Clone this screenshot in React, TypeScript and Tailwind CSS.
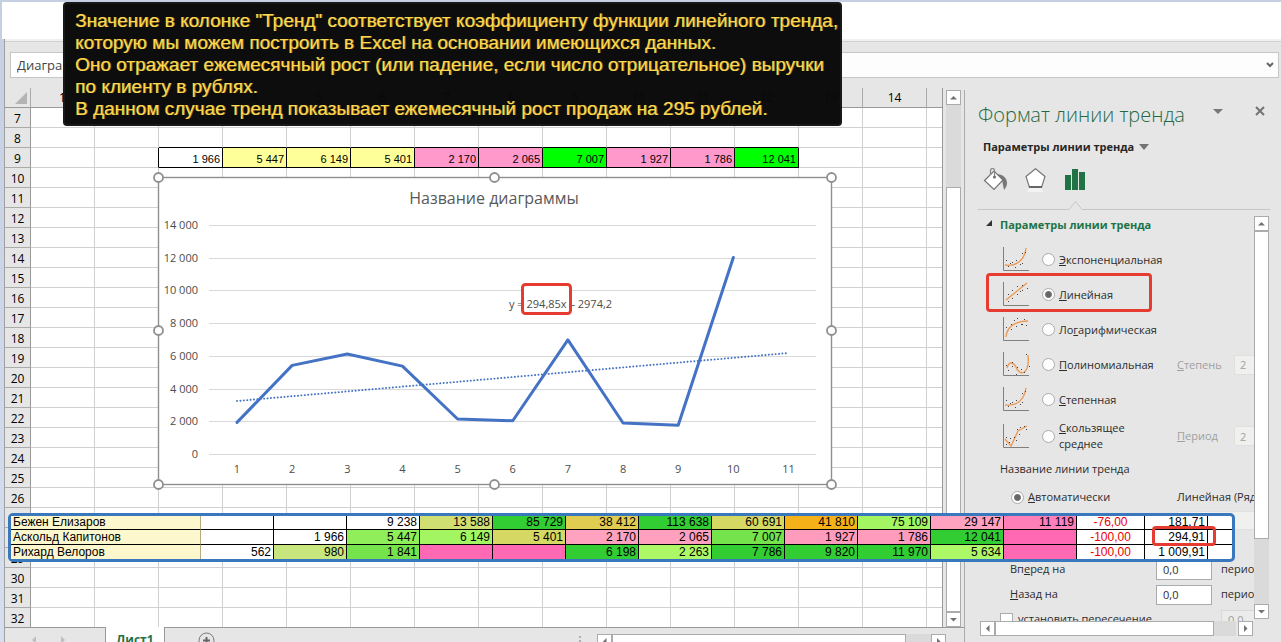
import React from "react";
import clsx from "clsx";

const ROWS = Array.from({ length: 26 }, (_, i) => i + 7);
const COLUMNS = Array.from({ length: 14 }, (_, i) => i + 1);

const SALES_ROW = 9;
const SALES: Record<number, { value: string; fill: string }> = {
  3: { value: "1 966", fill: "bg-white" },
  4: { value: "5 447", fill: "bg-[#ffff99]" },
  5: { value: "6 149", fill: "bg-[#ffff99]" },
  6: { value: "5 401", fill: "bg-[#ffff99]" },
  7: { value: "2 170", fill: "bg-[#ff99cc]" },
  8: { value: "2 065", fill: "bg-[#ff99cc]" },
  9: { value: "7 007", fill: "bg-[#00ff00]" },
  10: { value: "1 927", fill: "bg-[#ff99cc]" },
  11: { value: "1 786", fill: "bg-[#ff99cc]" },
  12: { value: "12 041", fill: "bg-[#00ff00]" },
};

function SheetCell({ row, col }: { row: number; col: number }) {
  const sale = row === SALES_ROW ? SALES[col] : undefined;
  const blackRight = row === SALES_ROW && col >= 2 && col <= 12;
  const blackBottom = (row === SALES_ROW || row === SALES_ROW - 1) && col >= 3 && col <= 12;
  return (
    <td
      className={clsx(
        "p-0 pr-[2px] text-right align-bottom font-['Liberation_Sans',sans-serif] text-[11px] leading-[16px] text-black",
        row < 32 && "border-b",
        col < 15 && "border-r",
        blackRight ? "border-r-black" : "border-r-[#d0d0d0]",
        blackBottom ? "border-b-black" : "border-b-[#d0d0d0]",
        sale ? sale.fill : "bg-white",
      )}
    >
      {sale?.value}
    </td>
  );
}

function Sheet() {
  return (
    <table className="w-full table-fixed border-separate border-spacing-0 border-r border-[#999]">
      <colgroup>
        <col className="w-[26px]" />
        {COLUMNS.map((c) => (
          <col key={c} className="w-[64px]" />
        ))}
        <col />
      </colgroup>
      <thead>
        <tr className="h-[20px]">
          <th className="border-r border-b border-r-[#ababab] border-b-[#999] p-0">
            <svg className="ml-[10px] block" width="12" height="12" aria-hidden="true">
              <path d="M12 0V12H0Z" fill="#b4b4b4" />
            </svg>
          </th>
          {COLUMNS.map((c) => (
            <th
              key={c}
              className="border-r border-b border-r-[#ababab] border-b-[#999] p-0 text-[12px] leading-[19px] font-normal text-black"
            >
              {c}
            </th>
          ))}
          <th className="border-b border-[#999] p-0" />
        </tr>
      </thead>
      <tbody>
        {ROWS.map((row) => (
          <tr key={row} className={row < 32 ? "h-[20px]" : "h-[19px]"}>
            <th
              className={clsx(
                "border-r border-r-[#999] border-b-[#ababab] p-0 pt-[2px] text-[12px] leading-[17px] font-normal text-black",
                row < 32 && "border-b",
              )}
            >
              {row}
            </th>
            {COLUMNS.map((col) => (
              <SheetCell key={col} row={row} col={col} />
            ))}
            <SheetCell row={row} col={15} />
          </tr>
        ))}
      </tbody>
    </table>
  );
}

const POINTS = [1966, 5447, 6149, 5401, 2170, 2065, 7007, 1927, 1786, 12041];
const xAt = (n: number) => 79 + (n - 1) * 55.15;
const yAt = (v: number) => 277 - (v * 229) / 14000;

function Chart() {
  const ticks = [0, 2000, 4000, 6000, 8000, 10000, 12000, 14000];
  const handles = [
    [0, 0], [336, 0], [673, 0],
    [0, 153], [673, 153],
    [0, 307], [336, 307], [673, 307],
  ];
  return (
    <svg
      className="block overflow-visible font-['Open_Sans','Noto_Sans',sans-serif]"
      width="674"
      height="308"
      role="img"
      aria-label="Название диаграммы"
    >
      <rect x="0.5" y="0.5" width="673" height="307" fill="#fff" stroke="#8f8f8f" strokeWidth="1.4" />
      <text x="336" y="27" textAnchor="middle" fontSize="16" fill="#595959">
        Название диаграммы
      </text>
      {ticks.map((t) => {
        const y = Math.round(yAt(t)) + 0.5;
        return (
          <g key={t}>
            <path d={`M51 ${y}H658`} stroke="#d9d9d9" />
            <text x="40" y={y + 3} textAnchor="end" fontSize="11" fill="#4c4c4c">
              {t === 0 ? "0" : `${t / 1000} 000`}
            </text>
          </g>
        );
      })}
      {Array.from({ length: 11 }, (_, i) => (
        <text key={i} x={xAt(i + 1)} y="296" textAnchor="middle" fontSize="11" fill="#4c4c4c">
          {i + 1}
        </text>
      ))}
      <path
        d={`M${xAt(1)} 224L${xAt(11)} 176`}
        stroke="#4472c4"
        strokeWidth="1.9"
        strokeDasharray="0.1 3.3"
        strokeLinecap="round"
      />
      <polyline
        points={POINTS.map((v, i) => `${xAt(i + 1)},${yAt(v) + 0.5}`).join(" ")}
        fill="none"
        stroke="#4472c4"
        strokeWidth="3"
        strokeLinecap="round"
        strokeLinejoin="round"
      />
      <rect x="364.5" y="107.5" width="48" height="29" rx="3" fill="#fff" />
      <text x="351" y="131" fontSize="11" fill="#4c4c4c">
        y = 294,85x – 2974,2
      </text>
      <rect x="364.5" y="107.5" width="48" height="29" rx="3" fill="none" stroke="#e53b31" strokeWidth="3" />
      {handles.map(([x, y]) => (
        <circle key={`${x}-${y}`} cx={x + 0.5} cy={y + 0.5} r="4.5" fill="#fff" stroke="#8f8f8f" strokeWidth="1.8" />
      ))}
    </svg>
  );
}

type Direction = "up" | "down" | "left" | "right";
const ARROWS: Record<Direction, string> = {
  up: "M3 8.5L6.5 5L10 8.5Z",
  down: "M3 5L6.5 8.5L10 5Z",
  left: "M8.5 3L5 6.5L8.5 10Z",
  right: "M5 3L8.5 6.5L5 10Z",
};

function ScrollButton({ dir, label }: { dir: Direction; label: string }) {
  return (
    <button aria-label={label} className="block size-[15px] shrink-0 border border-[#ababab] bg-white">
      <svg width="13" height="13" className="block" aria-hidden="true">
        <path d={ARROWS[dir]} fill="#737373" />
      </svg>
    </button>
  );
}

function BottomBar() {
  return (
    <div className="flex h-[15px] shrink-0 overflow-hidden">
      <div className="w-[101px] shrink-0 border-t border-r border-[#999]">
        <svg className="ml-[26px] block" width="40" height="14" aria-hidden="true">
          <path d="M5 8V16L1 12ZM30 8V16L34 12Z" fill="#c0c0c0" />
        </svg>
      </div>
      <button className="h-[26px] w-[58px] shrink-0 bg-white text-[12px] leading-[26px] font-bold text-[#1f7246]">Лист1</button>
      <div className="flex min-w-0 flex-1 border-t border-l border-[#999]">
        <button aria-label="Новый лист" className="mt-[4px] ml-[33px] block size-[17px] shrink-0">
          <svg width="17" height="17" className="block" aria-hidden="true">
            <circle cx="8.5" cy="8.5" r="7.5" fill="none" stroke="#777" />
            <path d="M8.5 5V12M5 8.5H12" stroke="#666" strokeWidth="2" />
          </svg>
        </button>
        <div className="flex-1" />
        <svg className="mr-[15px] block shrink-0" width="3" height="14" aria-hidden="true">
          <path d="M0 8h2v2H0zM0 12h2v2H0z" fill="#b0b0b0" />
        </svg>
        <div className="mt-[6px] mr-[18px] flex w-[349px] shrink-0">
          <ScrollButton dir="left" label="Прокрутить влево" />
          <div className="h-[15px] flex-1 border border-[#ababab] bg-white" />
          <div className="w-[25px] bg-[#dadada]" />
          <ScrollButton dir="right" label="Прокрутить вправо" />
        </div>
      </div>
    </div>
  );
}

const TREND_ICONS: Record<string, { curve: string; dots: number[][] }> = {
  exp: {
    curve: "M2 18C13 20 22 13 23 1",
    dots: [[3, 13], [7, 16], [9, 15], [13, 13], [12, 20], [5, 19], [17, 17], [19, 6], [19, 16], [22, 5]],
  },
  linear: {
    curve: "M3 18L24 1",
    dots: [[5, 12], [9, 8], [5, 19], [9, 16], [14, 4], [14, 12], [17, 9], [19, 3], [19, 8], [24, 6]],
  },
  log: {
    curve: "M3 20C4 9 13 4 25 4",
    dots: [[3, 10], [8, 7], [11, 3], [14, 1], [13, 9], [8, 12], [18, 7], [19, 7], [21, 2], [23, 8]],
  },
  poly: {
    curve: "M4 16C6 8 11 11 13 15C16 24 27 24 25 3",
    dots: [[3, 13], [5, 18], [9, 10], [9, 14], [14, 15], [13, 22], [18, 17], [21, 20], [23, 2], [26, 14]],
  },
  power: {
    curve: "M2 18C13 19 21 14 23 1",
    dots: [[3, 13], [7, 16], [9, 15], [13, 13], [12, 20], [5, 19], [17, 17], [19, 6], [19, 15], [22, 4]],
  },
  moving: {
    curve: "M2 15L8 22L15 7L24 2",
    dots: [[3, 13], [3, 20], [6, 18], [7, 14], [11, 13], [13, 16], [14, 5], [16, 10], [17, 3], [21, 2], [23, 5]],
  },
};

function TrendIcon({ kind }: { kind: string }) {
  const icon = TREND_ICONS[kind];
  return (
    <svg width="27" height="25" className="block shrink-0" aria-hidden="true">
      <path d="M0.5 0V23.5H26" fill="none" stroke="#808080" />
      <path d={icon.curve} fill="none" stroke="#ed9a55" strokeWidth="1.4" />
      {icon.dots.map(([x, y]) => (
        <rect key={`${x}-${y}`} x={x} y={y} width="1" height="1" fill="#444" />
      ))}
    </svg>
  );
}

const radioClass =
  "size-[13px] shrink-0 appearance-none rounded-full border border-[#ababab] bg-white checked:bg-[radial-gradient(circle,#666_2px,#777_3px,#fff_4px)]";

function TrendOption({
  id,
  accel,
  before = "",
  rest,
  checked = false,
  tall = false,
  extra,
}: {
  id: string;
  accel: string;
  before?: string;
  rest: string;
  checked?: boolean;
  tall?: boolean;
  extra?: { accel: string; rest: string };
}) {
  return (
    <div className={clsx("flex w-[280px] items-center", tall ? "h-[38px]" : "h-[35px]")}>
      <TrendIcon kind={id} />
      <input id={id} type="radio" name="trend" defaultChecked={checked} className={clsx(radioClass, "ml-[12px]")} />
      <label htmlFor={id} className={clsx("ml-[4px] shrink-0 leading-[16px]", tall ? "w-[91px] pr-[10px]" : "w-[118px]")}>
        {before}
        <u>{accel}</u>
        {rest}
      </label>
      {extra && (
        <>
          <label htmlFor={`${id}-value`} className={clsx("w-[57px] shrink-0 pt-px text-[#a0a0a0]", tall && "ml-[27px]")}>
            <u>{extra.accel}</u>
            {extra.rest}
          </label>
          <input
            id={`${id}-value`}
            disabled
            defaultValue="2"
            className="h-[20px] w-[44px] shrink-0 border border-[#e0e0dc] bg-[#f0f0ee] px-[5px] text-[#a0a0a0]"
          />
        </>
      )}
    </div>
  );
}

function PeriodField({ id, before, accel, rest }: { id: string; before: string; accel: string; rest: string }) {
  return (
    <div className="flex h-[25px] w-[320px] items-center pl-[10px]">
      <label htmlFor={id} className="w-[146px] shrink-0">
        {before}
        <u>{accel}</u>
        {rest}
      </label>
      <input id={id} defaultValue="0,0" className="h-[20px] w-[56px] shrink-0 border border-[#ababab] bg-white px-[6px]" />
      <span className="ml-[9px]">периода</span>
    </div>
  );
}

function TrendPane() {
  return (
    <aside className="mt-[12px] flex w-[317px] shrink-0 flex-col border-l border-[#ababab] pl-[13px] text-[11px] text-[#2c2c2c]">
      <div className="flex h-[46px] shrink-0 items-start">
        <h2 className="w-[235px] pt-[10px] font-['Open_Sans','Noto_Sans',sans-serif] text-[20px] leading-[30px] font-light whitespace-nowrap text-[#1f6a44]">
          Формат линии тренда
        </h2>
        <button aria-label="Параметры области задач" className="mt-[19px]">
          <svg width="10" height="5" className="block" aria-hidden="true">
            <path d="M0 0H10L5 5Z" fill="#777" />
          </svg>
        </button>
        <button aria-label="Закрыть" className="mt-[16px] ml-[32px]">
          <svg width="10" height="10" className="block" aria-hidden="true">
            <path d="M1 1L9 9M9 1L1 9" stroke="#737373" strokeWidth="2" />
          </svg>
        </button>
      </div>
      <button className="flex h-[22px] shrink-0 items-center gap-[5px] pl-[5px] font-bold text-[#262626]">
        Параметры линии тренда
        <svg width="10" height="6" className="block" aria-hidden="true">
          <path d="M0 0H10L5 6Z" fill="#737373" />
        </svg>
      </button>
      <div className="flex h-[51px] shrink-0 pt-[10px] pl-[5px]">
        <button aria-label="Заливка и границы" className="block h-[26px]">
          <svg width="26" height="26" className="block" aria-hidden="true">
            <path d="M13 6C20 6 24 10 24 15C24 19 21 22 21 22L19 12L15 8Z" fill="#777" />
            <path d="M1.5 12.5L11 3L20 12L11 21.5Z" fill="#fff" stroke="#737373" strokeWidth="1.2" />
            <path d="M7.5 7V2.5C7.5 -0.2 11.5 -0.2 11.5 2.5V9" fill="none" stroke="#888" strokeWidth="1.2" />
            <circle cx="11.5" cy="9" r="1.6" fill="#737373" />
          </svg>
        </button>
        <button aria-label="Эффекты" className="ml-[16px] block h-[26px]">
          <svg width="24" height="26" className="block" aria-hidden="true">
            <path d="M4 20H16L18 24H2Z" fill="#f3f3f3" />
            <path d="M10.5 0.7L20 8.5L16.5 19.5H4.500L1 8.5Z" fill="#fff" stroke="#777" strokeWidth="1.2" />
            <path d="M4 19H17" stroke="#666" strokeWidth="2" />
          </svg>
        </button>
        <button aria-label="Параметры линии тренда" className="ml-[16px] block h-[26px]">
          <svg width="20" height="26" className="block" aria-hidden="true">
            <path d="M0 7h6v15H0zM7 1h6v21H7zM14 4h6v18H14z" fill="#217346" />
          </svg>
        </button>
      </div>
      <div className="flex h-[7px] shrink-0 items-start pr-[11px]">
        <div className="h-px w-[91px] bg-[#c6c6c6]" />
        <svg width="13" height="9" className="-mt-[8px] block" aria-hidden="true">
          <path d="M0 8.5L6.5 0.5L13 8.5" fill="none" stroke="#c6c6c6" />
        </svg>
        <div className="h-px flex-1 bg-[#c6c6c6]" />
      </div>
      <div className="flex h-[405px] shrink-0 pr-[12px]">
        <div className="min-w-0 flex-1 overflow-hidden">
          <h3 className="flex h-[26px] items-start gap-[8px] pl-[8px] leading-[17px] font-bold whitespace-nowrap text-[#217346]">
            <svg width="6" height="6" className="mt-[4px] block" aria-hidden="true">
              <path d="M6 0V6H0Z" fill="#333" />
            </svg>
            Параметры линии тренда
          </h3>
          <fieldset className="relative pl-[25px]">
            <legend className="sr-only">Тип линии тренда</legend>
            <TrendOption id="exp" accel="Э" rest="кспоненциальная" />
            <TrendOption id="linear" accel="Л" rest="инейная" checked />
            <TrendOption id="log" before="Ло" accel="г" rest="арифмическая" />
            <TrendOption id="poly" accel="П" rest="олиномиальная" extra={{ accel: "С", rest: "тепень" }} />
            <TrendOption id="power" accel="С" rest="тепенная" />
            <TrendOption id="moving" accel="С" rest="кользящее среднее" tall extra={{ accel: "П", rest: "ериод" }} />
            <div className="pointer-events-none absolute top-[31px] left-[8px] h-[39px] w-[166px] rounded-[4px] border-3 border-[#e53b31]" />
          </fieldset>
          <h4 className="flex h-[28px] items-center pl-[22px]">Название линии тренда</h4>
          <div className="flex h-[28px] w-[320px] items-center pl-[33px]">
            <input id="auto-name" type="radio" name="trend-name" defaultChecked className={radioClass} />
            <label htmlFor="auto-name" className="ml-[4px] w-[149px] shrink-0">
              <u>А</u>втоматически
            </label>
            <span className="whitespace-nowrap">Линейная (Ряд1)</span>
          </div>
          <div className="h-[46px] pl-[199px]">
            <input aria-label="Имя" disabled className="block h-[19px] w-[100px] border border-[#e0e0dc] bg-[#f0f0ee]" />
          </div>
          <div className="pl-[22px]">
            <PeriodField id="forward" before="Вп" accel="е" rest="ред на" />
            <PeriodField id="backward" before="" accel="Н" rest="азад на" />
            <div className="flex h-[22px] w-[320px] items-center pt-[2px]">
              <input id="intercept" type="checkbox" className="size-[13px] shrink-0 appearance-none border border-[#ababab] bg-white" />
              <label htmlFor="intercept" className="ml-[5px] w-[203px] shrink-0">
                установить пересечение
              </label>
              <input aria-label="Пересечение" disabled defaultValue="0,0" className="h-[18px] w-[56px] border border-[#d8d8d8] bg-[#ebebeb] px-[6px] text-[#a0a0a0]" />
            </div>
          </div>
        </div>
        <div className="mb-[2px] flex w-[15px] shrink-0 flex-col bg-[#dadada]">
          <ScrollButton dir="up" label="Прокрутить вверх" />
          <div className="h-[308px] border border-[#ababab] bg-white" />
          <div className="flex-1" />
          <ScrollButton dir="down" label="Прокрутить вниз" />
        </div>
      </div>
      <div className="flex shrink-0 pr-[28px] pl-[2px]">
        <ScrollButton dir="left" label="Прокрутить влево" />
        <div className="h-[15px] flex-1 border border-[#ababab] bg-white" />
        <div className="mr-[2px] w-[22px] bg-[#dadada]" />
        <ScrollButton dir="right" label="Прокрутить вправо" />
      </div>
    </aside>
  );
}

type Cell = [string, string];
const W = "bg-white";
const CLIENTS: { name: string; cells: Cell[]; change: string; trend: string }[] = [
  {
    name: "Бежен Елизаров",
    cells: [
      ["", W], ["", W], ["9 238", W], ["13 588", "bg-[#cfdf72]"], ["85 729", "bg-[#32cd32]"], ["38 412", "bg-[#dfcc50]"],
      ["113 638", "bg-[#32cd32]"], ["60 691", "bg-[#d6d864]"], ["41 810", "bg-[#f4b118]"], ["75 109", "bg-[#a4f562]"],
      ["29 147", "bg-[#ffa2c0]"], ["11 119", "bg-[#ff80b8]"],
    ],
    change: "-76,00",
    trend: "181,71",
  },
  {
    name: "Аскольд Капитонов",
    cells: [
      ["", W], ["1 966", W], ["5 447", "bg-[#90ee5a]"], ["6 149", "bg-[#a4f562]"], ["5 401", "bg-[#d6d864]"], ["2 170", "bg-[#ffa2c0]"],
      ["2 065", "bg-[#ffa0be]"], ["7 007", "bg-[#74e34c]"], ["1 927", "bg-[#ff9cbe]"], ["1 786", "bg-[#ff9cbe]"],
      ["12 041", "bg-[#32cd32]"], ["", "bg-[#ff69b4]"],
    ],
    change: "-100,00",
    trend: "294,91",
  },
  {
    name: "Рихард Велоров",
    cells: [
      ["562", W], ["980", "bg-[#c8e67e]"], ["1 841", "bg-[#74e34c]"], ["", "bg-[#ff69b4]"], ["", "bg-[#ff69b4]"], ["6 198", "bg-[#32cd32]"],
      ["2 263", "bg-[#adf866]"], ["7 786", "bg-[#32cd32]"], ["9 820", "bg-[#32cd32]"], ["11 970", "bg-[#32cd32]"],
      ["5 634", "bg-[#adf866]"], ["", "bg-[#ff69b4]"],
    ],
    change: "-100,00",
    trend: "1 009,91",
  },
];

function ClientTable() {
  return (
    <div className="absolute top-[513px] left-[8px] w-[1227px] rounded-[5px] border-3 border-[#3a78bd] bg-white">
      <table className="w-full table-fixed border-separate border-spacing-0 font-['Liberation_Sans',sans-serif] text-[12px] leading-[13px] text-black">
        <colgroup>
          <col className="w-[190px]" />
          {CLIENTS[0].cells.map((_, i) => (
            <col key={i} className="w-[73px]" />
          ))}
          <col className="w-[68px]" />
          <col className="w-[63px]" />
          <col />
        </colgroup>
        <tbody>
          {CLIENTS.map((client, r) => {
            const line = r < 2 ? "border-b border-b-black" : "";
            return (
              <tr key={client.name} className={r === 1 ? "h-[15px]" : "h-[14px]"}>
                <th className={clsx("border-r border-r-[#b5ad80] bg-[#fdf7cd] p-0 pl-[2px] text-left font-normal", line)}>{client.name}</th>
                {client.cells.map(([value, fill], i) => (
                  <td key={i} className={clsx("border-r border-r-black p-0 pr-[2px] text-right", fill, line)}>
                    {value}
                  </td>
                ))}
                <td className={clsx("border-r border-r-black p-0 text-center text-[#ee0000]", line)}>{client.change}</td>
                <td className={clsx("border-r border-r-black p-0 pr-[2px] text-right", line)}>{client.trend}</td>
                <td className={clsx("p-0", line)} />
              </tr>
            );
          })}
        </tbody>
      </table>
      <div className="pointer-events-none absolute top-[10px] right-[16px] h-[20px] w-[64px] rounded-[4px] border-3 border-[#e53b31]" />
    </div>
  );
}

function Note() {
  return (
    <div className="absolute top-[2px] left-[63px] w-[779px] rounded-[4px] border-2 border-[#1c1c1c]/90 bg-[#080808]/98 px-[10px] pt-[6px] pb-[4px] font-['Liberation_Sans',sans-serif] text-[19px] leading-[22px] whitespace-nowrap text-[#ffd84d] [text-shadow:1px_0_0_#ffd84d80]">
      <p>Значение в колонке "Тренд" соответствует коэффициенту функции линейного тренда,</p>
      <p>которую мы можем построить в Excel на основании имеющихся данных.</p>
      <p>Оно отражает ежемесячный рост (или падение, если число отрицательное) выручки</p>
      <p>по клиенту в рублях.</p>
      <p>В данном случае тренд показывает ежемесячный рост продаж на 295 рублей.</p>
    </div>
  );
}

export default function App() {
  return (
    <div className="relative flex h-screen flex-col overflow-hidden bg-gradient-to-b from-[#c5cfe2] to-[#d5dff0] pt-[2px] font-['Open_Sans','Noto_Sans',sans-serif]">
      <div className="ml-[2px] h-[37px] shrink-0 bg-white" />
      <div className="ml-[4px] flex min-h-0 flex-1 flex-col border-l border-[#a0a0a0] bg-[#e6e6e6]">
        <div className="h-[3px] shrink-0 border-b border-[#d0d0d0] bg-[#f0f0f0]" />
        <div className="flex h-[36px] shrink-0 gap-[8px] pt-[10px] pr-[2px] pl-[5px]">
          <input
            aria-label="Имя"
            defaultValue="Диаграмма 1"
            className="h-[26px] w-[150px] border border-[#c6c6c6] bg-white px-[6px] text-[13px] text-[#444]"
          />
          <div className="flex h-[26px] flex-1 items-center border border-[#c6c6c6] bg-[#fdfdfd]">
            <input aria-label="Строка формул" className="min-w-0 flex-1" />
            <button aria-label="Развернуть строку формул" className="w-[16px]">
              <svg width="8" height="6" className="mx-auto block" aria-hidden="true">
                <path d="M1 1L4 4L7 1" fill="none" stroke="#666" strokeWidth="2" />
              </svg>
            </button>
          </div>
        </div>
        <div className="flex min-h-0 flex-1">
          <div className="flex min-w-0 flex-1 flex-col pt-[10px]">
            <div className="relative flex shrink-0 gap-[3px] pr-[3px]">
              <div className="min-w-0 flex-1">
                <Sheet />
              </div>
              <div className="mt-[2px] flex w-[15px] shrink-0 flex-col bg-[#dadada]">
                <ScrollButton dir="up" label="Прокрутить вверх" />
                <div className="h-[82px] shrink-0" />
                <div className="flex-1 border border-[#ababab] bg-white" />
                <ScrollButton dir="down" label="Прокрутить вниз" />
              </div>
              <div className="absolute top-[89px] left-[153px]">
                <Chart />
              </div>
            </div>
            <BottomBar />
          </div>
          <TrendPane />
        </div>
      </div>
      <ClientTable />
      <Note />
    </div>
  );
}
